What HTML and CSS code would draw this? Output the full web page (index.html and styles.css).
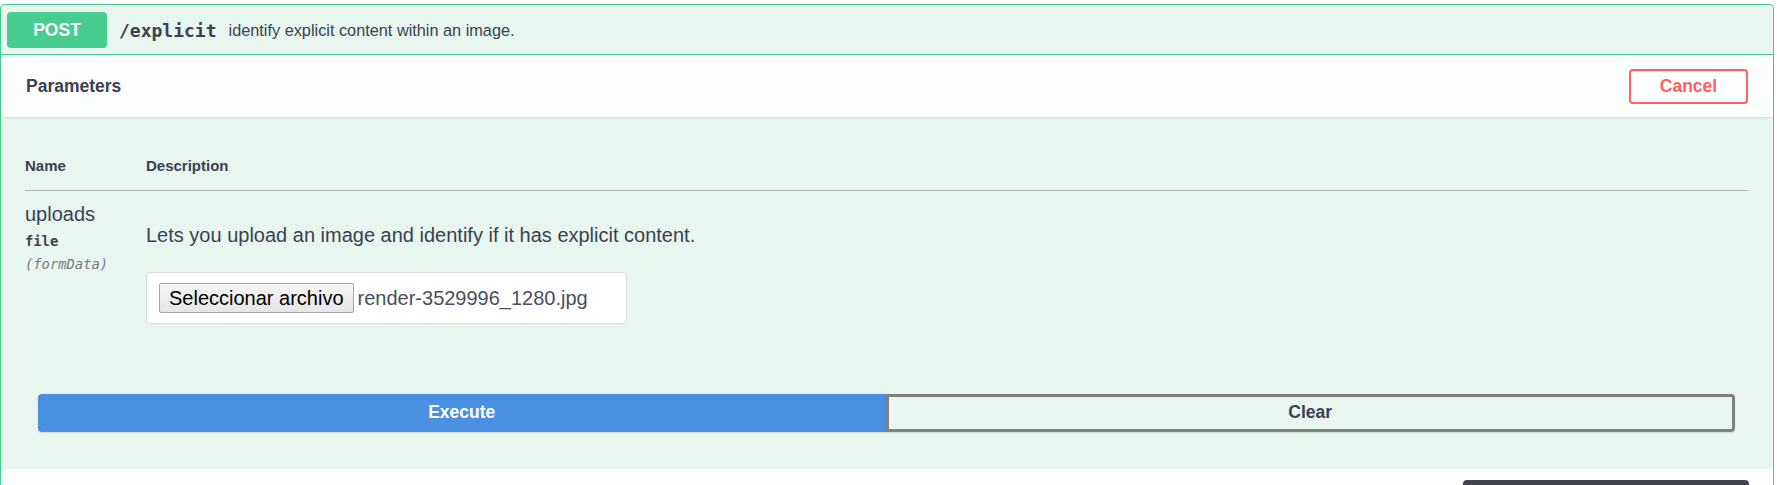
FILE: index.html
```html
<!DOCTYPE html>
<html lang="en">
<head>
<meta charset="utf-8">
<title>POST /explicit</title>
<link rel="stylesheet" href="styles.css">
</head>
<body>
<div class="page">
  <div class="opblock">
    <div class="summary">
      <span class="method">POST</span>
      <span class="path">/explicit</span>
      <span class="summary-desc">identify explicit content within an image.</span>
    </div>
    <div class="section-header">
      <h4 class="section-title">Parameters</h4>
      <button class="btn-cancel">Cancel</button>
    </div>
    <div class="table-container">
      <table class="params">
        <thead>
          <tr>
            <th class="col-name">Name</th>
            <th class="col-desc">Description</th>
          </tr>
        </thead>
        <tbody>
          <tr>
            <td class="col-name">
              <div class="param-name">uploads</div>
              <div class="param-type">file</div>
              <div class="param-in">(formData)</div>
            </td>
            <td class="col-desc">
              <p class="param-desc">Lets you upload an image and identify if it has explicit content.</p>
              <div class="file-box">
                <button class="file-btn">Seleccionar archivo</button>
                <span class="file-name">render-3529996_1280.jpg</span>
              </div>
            </td>
          </tr>
        </tbody>
      </table>
    </div>
    <div class="execute-wrapper">
      <button class="btn-execute">Execute</button>
      <button class="btn-clear">Clear</button>
    </div>
    <div class="responses-header">
      <div class="dark-block"></div>
    </div>
  </div>
</div>
</body>
</html>
```

FILE: styles.css
```css
* { box-sizing: border-box; }

html, body {
  margin: 0;
  padding: 0;
  background: #ffffff;
  overflow: hidden;
}

body {
  font-family: "Liberation Sans", Arial, sans-serif;
  color: #3b4151;
}

.page {
  padding-top: 4px;
  width: 1777px;
}

.opblock {
  width: 1774px;
  border: 1px solid #49cc90;
  border-radius: 4px;
  background: #e8f6ef;
}

.summary {
  display: flex;
  align-items: center;
  padding: 7px 6px 6px;
  border-bottom: 1px solid #49cc90;
}

.method {
  display: flex;
  align-items: center;
  justify-content: center;
  min-width: 100px;
  height: 36px;
  background: #49cc90;
  color: #ffffff;
  font-weight: bold;
  font-size: 17.5px;
  border-radius: 4px;
  text-shadow: 0 1px 0 rgba(0, 0, 0, 0.1);
}

.path {
  font-family: "DejaVu Sans Mono", "Liberation Mono", monospace;
  font-weight: bold;
  font-size: 18px;
  padding: 0 12px;
  color: #3b4151;
}

.summary-desc {
  font-size: 16.3px;
  color: #3b4151;
}

.section-header {
  display: flex;
  align-items: center;
  justify-content: space-between;
  height: 62px;
  padding: 0 25px;
  background: rgba(255, 255, 255, 0.85);
  box-shadow: 0 1px 2px rgba(0, 0, 0, 0.1);
}

.section-title {
  margin: 0;
  font-size: 17.5px;
  font-weight: bold;
  color: #3b4151;
}

.btn-cancel {
  width: 119px;
  height: 35px;
  border: 2px solid #ff6060;
  border-radius: 4px;
  background: transparent;
  color: #ff6060;
  font-family: "Liberation Sans", Arial, sans-serif;
  font-weight: bold;
  font-size: 17.5px;
  padding: 0;
}

.table-container {
  padding: 25px 25px 25px 24px;
}

.params {
  width: 100%;
  border-collapse: collapse;
}

.params th {
  text-align: left;
  font-size: 15px;
  line-height: 18px;
  font-weight: bold;
  padding: 15px 0;
  border-bottom: 1px solid rgba(59, 65, 81, 0.2);
  color: #3b4151;
}

.params .col-name {
  width: 121px;
}

.params td {
  vertical-align: top;
  padding: 12px 0 12.5px;
}

.param-name {
  font-size: 20px;
  line-height: 23px;
  color: #3b4151;
}

.param-type {
  font-family: "DejaVu Sans Mono", "Liberation Mono", monospace;
  font-weight: bold;
  font-size: 13.8px;
  line-height: 20px;
  padding-top: 5px;
  color: #3b4151;
}

.param-in {
  font-family: "DejaVu Sans Mono", "Liberation Mono", monospace;
  font-style: italic;
  font-size: 13.8px;
  line-height: 20px;
  padding-top: 3px;
  color: #777b80;
}

.param-desc {
  margin: 21px 0 0;
  font-size: 20px;
  line-height: 23px;
  color: #3b4151;
}

.file-box {
  display: flex;
  align-items: center;
  width: 481px;
  height: 52px;
  margin-top: 25px;
  padding: 0 12px;
  background: #ffffff;
  border: 1px solid #d9d9d9;
  border-radius: 4px;
}

.file-btn {
  height: 30px;
  padding: 0 9px;
  font-family: "Liberation Sans", Arial, sans-serif;
  font-size: 20px;
  color: #000000;
  background: linear-gradient(#f5f5f5, #e6e6e6);
  border: 1px solid #a6a6a6;
  border-radius: 2px;
}

.file-name {
  margin-left: 4px;
  font-size: 20px;
  color: #4a4f5c;
}

.execute-wrapper {
  display: flex;
  padding: 32px 38px 37px 37px;
}

.btn-execute,
.btn-clear {
  flex: 1;
  height: 38px;
  font-family: "Liberation Sans", Arial, sans-serif;
  font-weight: bold;
  font-size: 17.5px;
  padding: 0;
  box-shadow: 0 1px 2px rgba(0, 0, 0, 0.1);
}

.btn-execute {
  background: #4990e2;
  color: #ffffff;
  border: 2px solid #4990e2;
  border-radius: 4px 0 0 4px;
}

.btn-clear {
  background: transparent;
  color: #3b4151;
  border: 3px solid #7e827f;
  border-radius: 0 4px 4px 0;
}

.responses-header {
  display: flex;
  justify-content: flex-end;
  height: 60px;
  padding: 11px 24px 0 0;
  background: rgba(255, 255, 255, 0.85);
}

.dark-block {
  width: 286px;
  height: 40px;
  background: #41444e;
  border-radius: 4px;
}
```
